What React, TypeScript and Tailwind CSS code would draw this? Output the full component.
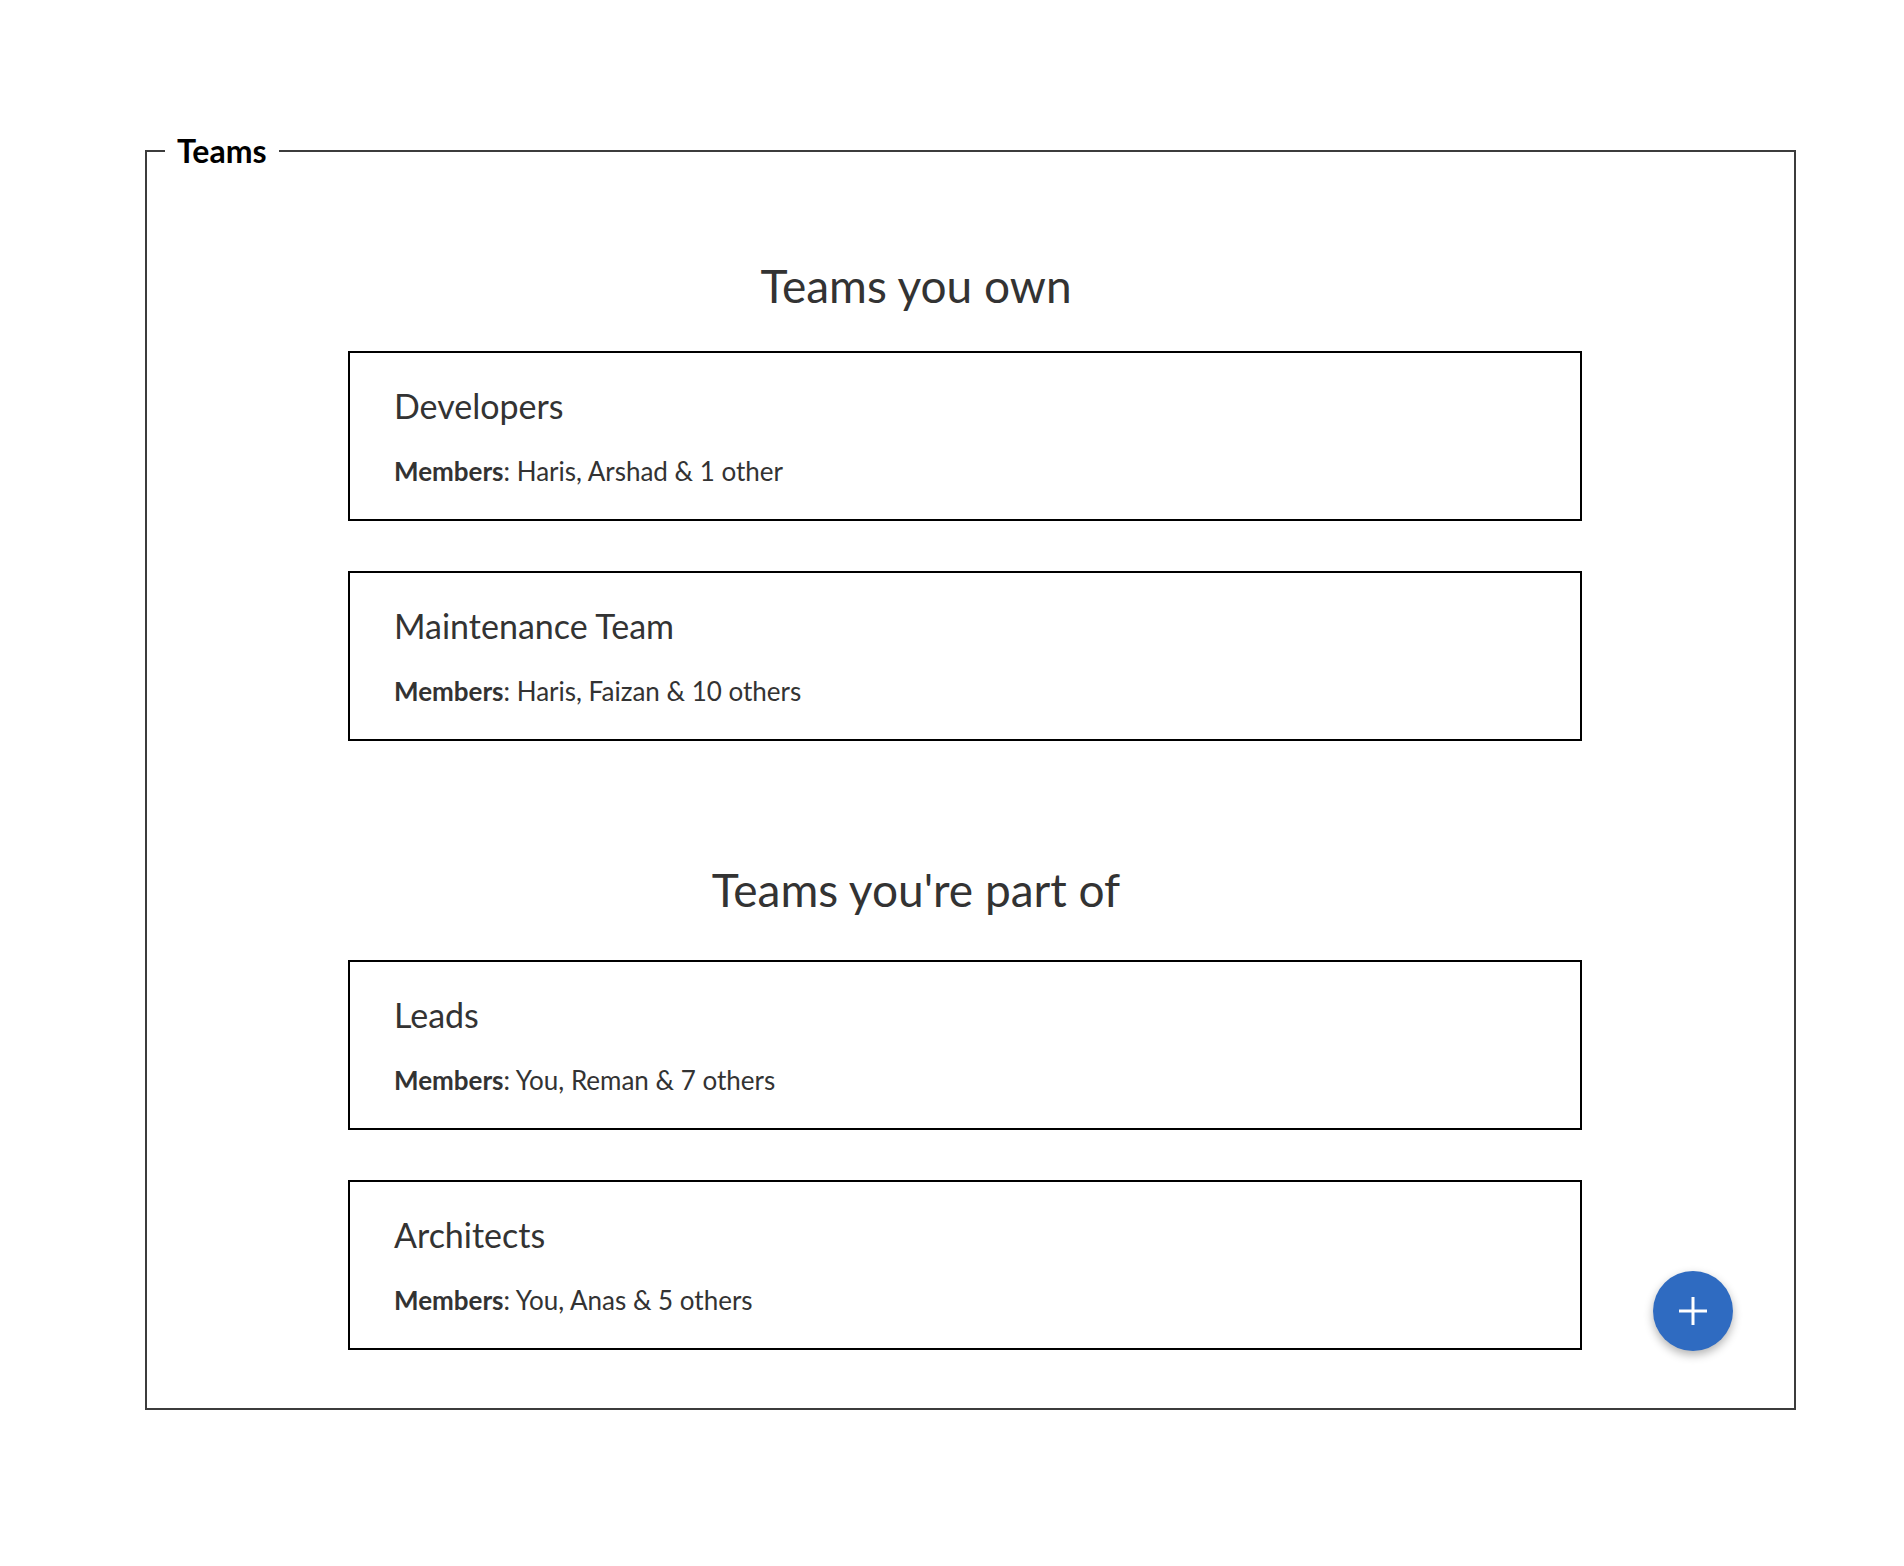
import React from 'react';

type Team = { name: string; members: string };

const owned: Team[] = [
  { name: 'Developers', members: 'Haris, Arshad & 1 other' },
  { name: 'Maintenance Team', members: 'Haris, Faizan & 10 others' },
];

const joined: Team[] = [
  { name: 'Leads', members: 'You, Reman & 7 others' },
  { name: 'Architects', members: 'You, Anas & 5 others' },
];

const TeamCard: React.FC<{ team: Team }> = ({ team }) => (
  <div className="box-border h-[170px] w-[1234px] border-2 border-black bg-white pl-[44px] pt-[33px]">
    <div className="text-[34px] leading-[1.2] text-[#333]">{team.name}</div>
    <div className="mt-[29px] text-[26px] leading-[1.2] text-[#333]">
      <span className="font-bold">Members</span>: {team.members}
    </div>
  </div>
);

const App: React.FC = () => {
  return (
    <div className="min-h-[1566px] bg-white pt-[127px] font-['Lato',sans-serif]">
      <fieldset className="relative ml-[145px] box-border w-[1651px] border-2 border-[#3c3c3c] pb-[58px] pt-[83px]">
        <legend className="ml-[18px] px-[12px] text-[32px] font-bold leading-[1.5] text-black">Teams</legend>

        <div className="ml-[201px] w-[1136px] text-center text-[46px] leading-[1.2] text-[#333]">Teams you own</div>
        <div className="ml-[201px] mt-[38px] flex flex-col gap-[50px]">
          {owned.map((t) => (
            <TeamCard key={t.name} team={t} />
          ))}
        </div>

        <div className="ml-[201px] mt-[121px] w-[1136px] text-center text-[46px] leading-[1.2] text-[#333]">
          Teams you're part of
        </div>
        <div className="ml-[201px] mt-[43px] flex flex-col gap-[50px]">
          {joined.map((t) => (
            <TeamCard key={t.name} team={t} />
          ))}
        </div>

        <button className="absolute bottom-[57px] right-[61px] flex h-[80px] w-[80px] items-center justify-center rounded-full bg-[#2f6bc1] shadow-[0_4px_10px_rgba(0,0,0,0.3)]">
          <svg width="30" height="30" viewBox="0 0 30 30" fill="none" stroke="white" strokeWidth="3">
            <path d="M15 1v28M1 15h28" />
          </svg>
        </button>
      </fieldset>
    </div>
  );
};

export default App;
